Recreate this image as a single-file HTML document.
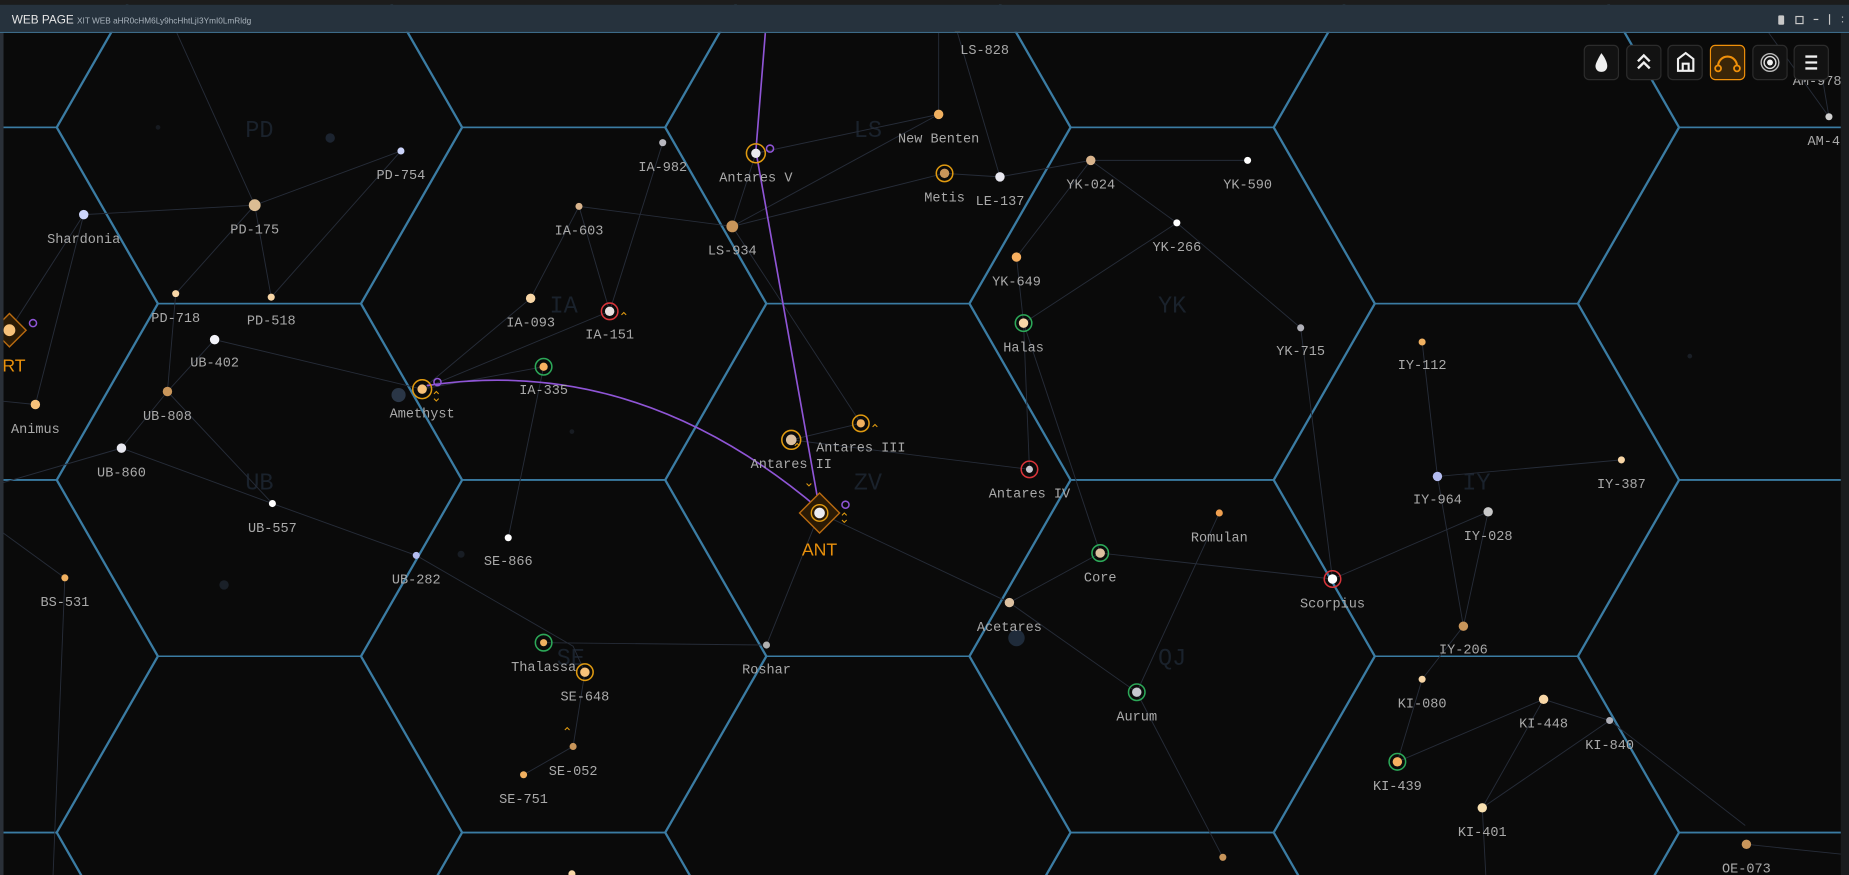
<!DOCTYPE html>
<html><head><meta charset="utf-8"><style>
html,body{margin:0;padding:0;background:#0a0a0a;width:1849px;height:875px;overflow:hidden}
svg{display:block;position:absolute;left:0;top:0}
.l{font-family:"Liberation Mono",monospace;font-size:11.5px;fill:#a9a9a9;text-anchor:middle}
.r{font-family:"Liberation Mono",monospace;font-size:20px;fill:#1a222c;text-anchor:middle}
.e{stroke:#262c38;stroke-width:0.8;fill:none}
</style></head><body>
<svg width="1849" height="875" viewBox="0 0 1568 742" preserveAspectRatio="none" xmlns="http://www.w3.org/2000/svg">
<defs>
<path id="h" d="M-171.5 0 L-85.75 -149.5 L85.75 -149.5 L171.5 0 L85.75 149.5 L-85.75 149.5 Z" fill="none" stroke="#3b7ca3" stroke-width="1.3"/>
</defs>
<rect x="0" y="0" width="1568" height="742" fill="#0a0a0a"/>
<g>
<use href="#h" x="-38" y="-41.5"/><use href="#h" x="-38" y="257.5"/><use href="#h" x="-38" y="556.5"/><use href="#h" x="-38" y="855.5"/>
<use href="#h" x="220" y="-191"/><use href="#h" x="220" y="108"/><use href="#h" x="220" y="407"/><use href="#h" x="220" y="706"/>
<use href="#h" x="478" y="-41.5"/><use href="#h" x="478" y="257.5"/><use href="#h" x="478" y="556.5"/><use href="#h" x="478" y="855.5"/>
<use href="#h" x="736" y="-191"/><use href="#h" x="736" y="108"/><use href="#h" x="736" y="407"/><use href="#h" x="736" y="706"/>
<use href="#h" x="994" y="-41.5"/><use href="#h" x="994" y="257.5"/><use href="#h" x="994" y="556.5"/><use href="#h" x="994" y="855.5"/>
<use href="#h" x="1252" y="-191"/><use href="#h" x="1252" y="108"/><use href="#h" x="1252" y="407"/><use href="#h" x="1252" y="706"/>
<use href="#h" x="1510" y="-41.5"/><use href="#h" x="1510" y="257.5"/><use href="#h" x="1510" y="556.5"/><use href="#h" x="1510" y="855.5"/>
</g>
<g>
<text class="r" x="220" y="116">PD</text><text class="r" x="736" y="116">LS</text>
<text class="r" x="478" y="265">IA</text><text class="r" x="994" y="265">YK</text>
<text class="r" x="220" y="415">UB</text><text class="r" x="736" y="415">ZV</text><text class="r" x="1252" y="415">IY</text>
<text class="r" x="484" y="564">SE</text><text class="r" x="994" y="564">QJ</text>
</g>
<g class="e">
<path d="M150 28 L216 174 L340 128 L230 252 L216 174 L149 249 M71 182 L216 174 M71 182 L30 343 M71 182 L8 280 M149 249 L142 332 L182 288 L358 330 M142 332 L103 380 L231 427 M142 332 L231 427 L353 471 L486 548 L496 570 L486 633 L444 657 M103 380 L0 410 M30 343 L0 340 M55 490 L45 742 M55 490 L0 450"/>
<path d="M358 330 L450 253 L491 175 L621 192 M358 330 L517 264 L562 121 M491 175 L517 264 M358 330 L461 311 M461 311 L431 456 M641 130 L796 97 M641 130 L621 192 L801 147 M621 192 L796 97 M796 97 L796 28 M812 28 L848 150 M801 147 L848 150 M848 150 L925 136 L1058 136 M925 136 L998 189 L868 274 M925 136 L862 218 L868 274 M998 189 L1103 278 L1130 491 M868 274 L873 398 M868 274 L933 469"/>
<path d="M671 373 L730 359 M671 373 L873 398 M621 192 L730 359 M695 435 L856 511 L933 469 L1130 491 M695 435 L650 547 L461 545 M856 511 L964 587 L1034 435 M964 587 L1037 727 M1206 290 L1219 404 L1375 390 M1219 404 L1241 531 L1262 434 L1130 491 M1206 576 L1241 531 M1185 646 L1206 576 M1185 646 L1309 593 L1365 611 L1257 685 L1309 593 M1257 685 L1260 742 M1365 611 L1480 700 M1481 716 L1568 725 M1551 99 L1541 40 M1551 99 L1500 28"/>
</g>
<circle cx="134" cy="108" r="2" fill="#161a20"/><circle cx="280" cy="117" r="4" fill="#1c2430"/>
<circle cx="338" cy="335" r="6" fill="#2a3646"/><circle cx="190" cy="496" r="4" fill="#1a2028"/>
<circle cx="862" cy="541" r="7" fill="#1f2b3a"/><circle cx="1433" cy="302" r="2" fill="#1a1f26"/>
<circle cx="485" cy="366" r="2" fill="#181c22"/><circle cx="391" cy="470" r="3" fill="#181d24"/>
<path d="M362 327 Q540 300 695 432" stroke="#8f55d6" stroke-width="1.4" fill="none"/>
<path d="M649 28 L641 128 L695 432" stroke="#8f55d6" stroke-width="1.4" fill="none"/>
<g>
<circle cx="71" cy="182" r="4" fill="#ccd4fa"/><circle cx="216" cy="174" r="5" fill="#dcbd93"/>
<circle cx="340" cy="128" r="3" fill="#ccd4fa"/><circle cx="149" cy="249" r="3" fill="#f8d6a6"/>
<circle cx="230" cy="252" r="3" fill="#f8d6a6"/><circle cx="182" cy="288" r="4" fill="#f4f4fa"/>
<circle cx="142" cy="332" r="4" fill="#c8955a"/><circle cx="103" cy="380" r="4" fill="#e8e8f0"/>
<circle cx="231" cy="427" r="3" fill="#ffffff"/><circle cx="353" cy="471" r="3" fill="#b4bcf0"/>
<circle cx="30" cy="343" r="4" fill="#f8c27a"/><circle cx="55" cy="490" r="3" fill="#f0b060"/>
<circle cx="562" cy="121" r="3" fill="#b8b8c0"/><circle cx="491" cy="175" r="3" fill="#d9b48c"/>
<circle cx="450" cy="253" r="4" fill="#f8d6a6"/><circle cx="621" cy="192" r="5" fill="#c8955a"/>
<circle cx="796" cy="97" r="4" fill="#f0b060"/><circle cx="848" cy="150" r="4" fill="#e8e8f0"/>
<circle cx="925" cy="136" r="4" fill="#d9b48c"/><circle cx="1058" cy="136" r="3" fill="#ffffff"/>
<circle cx="998" cy="189" r="3" fill="#ffffff"/><circle cx="862" cy="218" r="4" fill="#f8b060"/>
<circle cx="1103" cy="278" r="3" fill="#b0b0b8"/><circle cx="431" cy="456" r="3" fill="#ffffff"/>
<circle cx="486" cy="633" r="3" fill="#c8955a"/><circle cx="444" cy="657" r="3" fill="#f0b060"/>
<circle cx="650" cy="547" r="3" fill="#b0b0b0"/><circle cx="1034" cy="435" r="3" fill="#f0a050"/>
<circle cx="856" cy="511" r="4" fill="#dcc0a0"/><circle cx="1206" cy="290" r="3" fill="#f0b060"/>
<circle cx="1375" cy="390" r="3" fill="#f8d6a6"/><circle cx="1219" cy="404" r="4" fill="#b4bcf0"/>
<circle cx="1262" cy="434" r="4" fill="#c8c8c8"/><circle cx="1241" cy="531" r="4" fill="#c8955a"/>
<circle cx="1206" cy="576" r="3" fill="#f8d6a6"/><circle cx="1309" cy="593" r="4" fill="#f8d6a6"/>
<circle cx="1365" cy="611" r="3" fill="#b0b0b8"/><circle cx="1257" cy="685" r="4" fill="#f8e0b0"/>
<circle cx="1481" cy="716" r="4" fill="#c8955a"/><circle cx="1551" cy="99" r="3" fill="#d0d0d0"/>
<circle cx="1037" cy="727" r="3" fill="#c8955a"/><circle cx="485" cy="741" r="3" fill="#f8d6a6"/>
<circle cx="812" cy="25" r="3" fill="#f0b060"/>
</g>
<g fill="none" stroke-width="1.3">
<circle cx="517" cy="264" r="7" stroke="#d8343a"/><circle cx="461" cy="311" r="7" stroke="#2ca858"/>
<circle cx="358" cy="330" r="8" stroke="#e09a10"/><circle cx="641" cy="130" r="8" stroke="#e09a10"/>
<circle cx="801" cy="147" r="7" stroke="#e09a10"/><circle cx="868" cy="274" r="7" stroke="#2ca858"/>
<circle cx="671" cy="373" r="8" stroke="#e09a10"/><circle cx="730" cy="359" r="7" stroke="#e09a10"/>
<circle cx="873" cy="398" r="7" stroke="#d8343a"/><circle cx="461" cy="545" r="7" stroke="#2ca858"/>
<circle cx="496" cy="570" r="7" stroke="#e09a10"/><circle cx="933" cy="469" r="7" stroke="#2ca858"/>
<circle cx="964" cy="587" r="7" stroke="#2ca858"/><circle cx="1130" cy="491" r="7" stroke="#d8343a"/>
<circle cx="1185" cy="646" r="7" stroke="#2ca858"/>
<circle cx="653" cy="126" r="3" stroke="#8f55d6"/><circle cx="371" cy="324" r="3" stroke="#8f55d6"/>
<circle cx="717" cy="428" r="3" stroke="#8f55d6"/><circle cx="28" cy="274" r="3" stroke="#8f55d6"/>
</g>
<g>
<circle cx="517" cy="264" r="4" fill="#e8e0e0"/><circle cx="461" cy="311" r="3.5" fill="#f8b060"/>
<circle cx="358" cy="330" r="4" fill="#f8c27a"/><circle cx="641" cy="130" r="4" fill="#ececf0"/>
<circle cx="801" cy="147" r="4" fill="#c8955a"/><circle cx="868" cy="274" r="4" fill="#f8d6a6"/>
<circle cx="671" cy="373" r="4.5" fill="#dcc0a0"/><circle cx="730" cy="359" r="3.5" fill="#f0b060"/>
<circle cx="873" cy="398" r="3" fill="#c8c8d0"/><circle cx="461" cy="545" r="3" fill="#f0b060"/>
<circle cx="496" cy="570" r="4" fill="#f8c27a"/><circle cx="933" cy="469" r="4" fill="#dcc0a0"/>
<circle cx="964" cy="587" r="4" fill="#c8c8d0"/><circle cx="1130" cy="491" r="4" fill="#ffffff"/>
<circle cx="1185" cy="646" r="4" fill="#f8b060"/>
</g>
<rect x="683" y="423" width="24" height="24" transform="rotate(45 695 435)" fill="#2a1a05" stroke="#b86a10" stroke-width="1.2"/>
<circle cx="695" cy="435" r="7" fill="none" stroke="#e09a10" stroke-width="1.2"/>
<circle cx="695" cy="435" r="4.5" fill="#ececf0"/>
<path d="M714 437 l2 -2 l2 2 M714 441 l2 2 l2 -2 M684 410 l2 2 l2 -2 M674 378 l2 -2 l2 2 M740 362 l2 -2 l2 2 M527 267 l2 -2 l2 2 M368 334 l2 -2 l2 2 M368 338 l2 2 l2 -2 M479 619 l2 -2 l2 2" stroke="#e09a10" stroke-width="0.9" fill="none"/>
<text x="695" y="471" font-family="Liberation Sans,sans-serif" font-size="15" fill="#e8900c" text-anchor="middle">ANT</text>
<rect x="-2" y="270" width="20" height="20" transform="rotate(45 8 280)" fill="#2a1a05" stroke="#b86a10" stroke-width="1.2"/>
<circle cx="8" cy="280" r="5" fill="#f8c27a"/>
<text x="2" y="315" font-family="Liberation Sans,sans-serif" font-size="15" fill="#e8900c">RT</text>
<g class="l">
<text x="71" y="206">Shardonia</text><text x="216" y="198">PD-175</text><text x="340" y="152">PD-754</text>
<text x="149" y="273">PD-718</text><text x="230" y="275">PD-518</text><text x="182" y="311">UB-402</text>
<text x="142" y="356">UB-808</text><text x="103" y="404">UB-860</text><text x="231" y="451">UB-557</text>
<text x="353" y="495">UB-282</text><text x="30" y="367">Animus</text><text x="55" y="514">BS-531</text>
<text x="562" y="145">IA-982</text><text x="491" y="199">IA-603</text><text x="450" y="277">IA-093</text>
<text x="517" y="287">IA-151</text><text x="461" y="334">IA-335</text><text x="358" y="354">Amethyst</text>
<text x="641" y="154">Antares V</text><text x="621" y="216">LS-934</text><text x="835" y="46">LS-828</text>
<text x="796" y="121">New Benten</text><text x="801" y="171">Metis</text><text x="848" y="174">LE-137</text>
<text x="925" y="160">YK-024</text><text x="1058" y="160">YK-590</text><text x="998" y="213">YK-266</text>
<text x="862" y="242">YK-649</text><text x="868" y="298">Halas</text><text x="1103" y="301">YK-715</text>
<text x="671" y="397">Antares II</text><text x="730" y="383">Antares III</text><text x="873" y="422">Antares IV</text>
<text x="431" y="479">SE-866</text><text x="461" y="569">Thalassa</text><text x="496" y="594">SE-648</text>
<text x="486" y="657">SE-052</text><text x="444" y="681">SE-751</text><text x="650" y="571">Roshar</text>
<text x="933" y="493">Core</text><text x="1034" y="459">Romulan</text><text x="856" y="535">Acetares</text>
<text x="964" y="611">Aurum</text><text x="1130" y="515">Scorpius</text><text x="1206" y="313">IY-112</text>
<text x="1375" y="414">IY-387</text><text x="1219" y="427">IY-964</text><text x="1262" y="458">IY-028</text>
<text x="1241" y="554">IY-206</text><text x="1206" y="600">KI-080</text><text x="1309" y="617">KI-448</text>
<text x="1365" y="635">KI-840</text><text x="1185" y="670">KI-439</text><text x="1257" y="709">KI-401</text>
<text x="1481" y="740">OE-073</text><text x="1541" y="72">AM-978</text><text x="1550" y="123">AM-42</text>
</g>
<g stroke-width="1">
<rect x="1343.5" y="38.5" width="29" height="29" rx="4" fill="#121212" stroke="#2c2c2c"/>
<rect x="1379.5" y="38.5" width="29" height="29" rx="4" fill="#121212" stroke="#2c2c2c"/>
<rect x="1414.5" y="38.5" width="29" height="29" rx="4" fill="#121212" stroke="#2c2c2c"/>
<rect x="1450.5" y="38.5" width="29" height="29" rx="4" fill="#3a2508" stroke="#f0900a"/>
<rect x="1486.5" y="38.5" width="29" height="29" rx="4" fill="#121212" stroke="#2c2c2c"/>
<rect x="1521.5" y="38.5" width="29" height="29" rx="4" fill="#121212" stroke="#2c2c2c"/>
</g>
<path d="M1358 45 C1362 50 1363 54 1363 56 C1363 59 1361 61 1358 61 C1355 61 1353 59 1353 56 C1353 54 1355 50 1358 45 Z" fill="#f0f0f0"/>
<path d="M1389 52 l5 -5 l5 5 M1389 58 l5 -5 l5 5" stroke="#f0f0f0" stroke-width="2" fill="none"/>
<path d="M1423 50 l6.5 -5 l6.5 5 v10 h-13 Z M1427 60 v-6 h5 v6" stroke="#f0f0f0" stroke-width="1.8" fill="none"/>
<path d="M1457 56 A8 8 0 0 1 1473 56" stroke="#f0900a" stroke-width="1.8" fill="none"/>
<circle cx="1457" cy="58" r="2.5" stroke="#f0900a" stroke-width="1.5" fill="none"/>
<circle cx="1473" cy="58" r="2.5" stroke="#f0900a" stroke-width="1.5" fill="none"/>
<circle cx="1501" cy="53" r="7.5" stroke="#bbb" stroke-width="1.2" fill="none"/>
<circle cx="1501" cy="53" r="5" stroke="#ddd" stroke-width="1.2" fill="none"/>
<circle cx="1501" cy="53" r="2.5" fill="#f0f0f0"/>
<path d="M1531 48 h10 M1531 53 h10 M1531 58 h10" stroke="#f0f0f0" stroke-width="2"/>
<rect x="0" y="28" width="3" height="714" fill="#2a3038"/>
<rect x="1561" y="28" width="7" height="714" fill="#1a1c1e"/>
<rect x="0" y="0" width="1568" height="4" fill="#1c1c1c"/>
<rect x="0" y="4" width="1568" height="23" fill="#26323d"/>
<rect x="0" y="27" width="1568" height="1" fill="#3d6a88"/>
<text x="10" y="20" font-family="Liberation Sans,sans-serif" font-size="10" fill="#e6e6e6">WEB PAGE <tspan font-size="7" fill="#aab4bd">XIT WEB aHR0cHM6Ly9hcHhtLjI3YmI0LmRldg</tspan></text>
<g fill="#c8c8c8">
<rect x="1508" y="13" width="5" height="8" rx="1"/><rect x="1523" y="14" width="6" height="6" fill="none" stroke="#c8c8c8"/>
<rect x="1538" y="16" width="4" height="1"/><rect x="1551" y="12" width="1" height="9"/><rect x="1562" y="14" width="1" height="1"/><rect x="1562" y="18" width="1" height="1"/>
</g>
</svg>
</body></html>
